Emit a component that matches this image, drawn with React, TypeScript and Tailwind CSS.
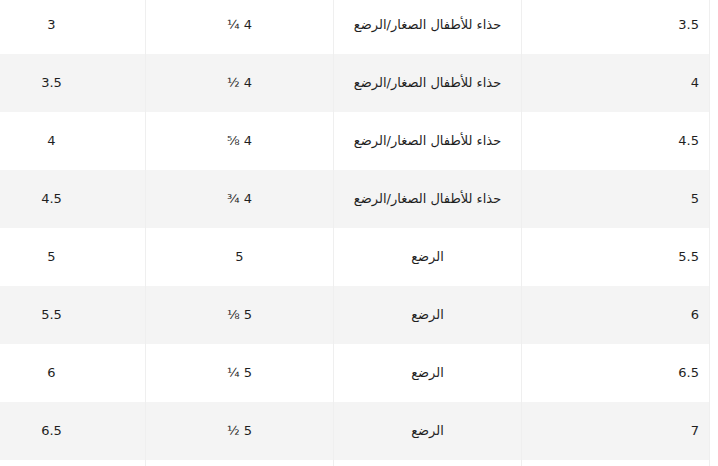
const rows = [
  ['3.5', 'حذاء للأطفال الصغار/الرضع', '4 ¼', '3'],
  ['4', 'حذاء للأطفال الصغار/الرضع', '4 ½', '3.5'],
  ['4.5', 'حذاء للأطفال الصغار/الرضع', '4 ⅝', '4'],
  ['5', 'حذاء للأطفال الصغار/الرضع', '4 ¾', '4.5'],
  ['5.5', 'الرضع', '5', '5'],
  ['6', 'الرضع', '5 ⅛', '5.5'],
  ['6.5', 'الرضع', '5 ¼', '6'],
  ['7', 'الرضع', '5 ½', '6.5'],
  ['', '', '', ''],
]

export default function App() {
  return (
    <div className="w-[718px] h-[466px] overflow-hidden bg-white">
      <div
        dir="rtl"
        className="w-[710px] overflow-hidden -mt-[4px] font-['DejaVu_Sans','Noto_Sans',sans-serif] text-[13px] text-[#1f1f1f]"
      >
        <table className="w-[752px] border-collapse table-fixed border-r border-[#efefef]">
          <tbody>
            {rows.map((r, i) => (
              <tr key={i} className={i % 2 === 1 ? 'bg-[#f4f4f4]' : 'bg-white'}>
                {r.map((cell, j) => (
                  <td
                    key={j}
                    className={`h-[58px] w-[188px] px-[10px] border-l border-[#efefef] ${
                      j === 0 ? 'text-start' : 'text-center'
                    }`}
                  >
                    {cell}
                  </td>
                ))}
              </tr>
            ))}
          </tbody>
        </table>
      </div>
    </div>
  )
}
